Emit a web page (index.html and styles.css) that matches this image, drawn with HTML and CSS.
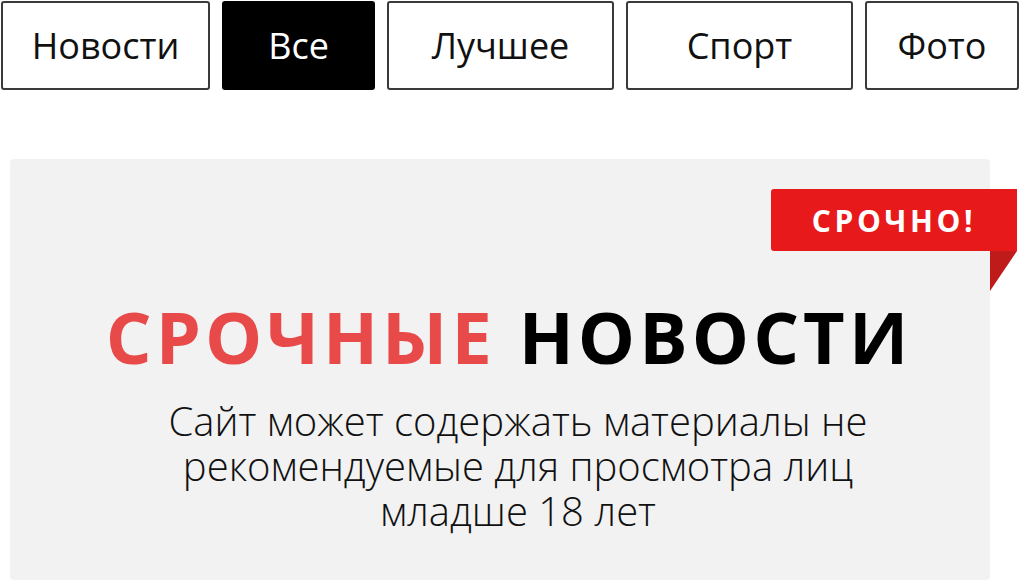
FILE: index.html
```html
<!DOCTYPE html>
<html lang="ru">
<head>
<meta charset="utf-8">
<title>Срочные новости</title>
<link rel="stylesheet" href="styles.css">
</head>
<body>
<nav class="tabs">
  <a class="tab tab-news" href="#">Новости</a>
  <a class="tab tab-all is-active" href="#">Все</a>
  <a class="tab tab-best" href="#">Лучшее</a>
  <a class="tab tab-sport" href="#">Спорт</a>
  <a class="tab tab-photo" href="#">Фото</a>
</nav>
<section class="card">
  <div class="ribbon">СРОЧНО!</div>
  <div class="ribbon-fold"></div>
  <h1 class="headline"><span class="accent">СРОЧНЫЕ</span> НОВОСТИ</h1>
  <p class="desc">Сайт может содержать материалы не рекомендуемые для просмотра лиц младше 18 лет</p>
</section>
</body>
</html>
```
FILE: styles.css
```css
html, body {
  margin: 0;
  padding: 0;
  background: #ffffff;
  font-family: "Open Sans", "Noto Sans", sans-serif;
  color: #111111;
}
.tabs {
  display: flex;
  gap: 12px;
  padding: 1px 0 0 1px;
}
.tab {
  box-sizing: border-box;
  height: 89px;
  display: flex;
  align-items: center;
  justify-content: center;
  border: 2px solid #3a3a3a;
  border-radius: 3px;
  font-size: 36px;
  font-weight: 400;
  color: #111111;
  text-decoration: none;
}
.tab-news { width: 209px; }
.tab-all { width: 153px; }
.tab-best { width: 227px; }
.tab-sport { width: 227px; }
.tab-photo { width: 154px; }
.tab.is-active {
  background: #000000;
  border-color: #000000;
  color: #ffffff;
}
.card {
  position: relative;
  box-sizing: border-box;
  width: 980px;
  height: 421px;
  margin: 69px 0 0 10px;
  padding-top: 141px;
  background: #f2f2f2;
  border-radius: 4px;
}
.ribbon {
  position: absolute;
  top: 30px;
  left: 761px;
  width: 246px;
  height: 62px;
  display: flex;
  align-items: center;
  justify-content: center;
  background: #e8191a;
  border-radius: 3px 0 0 3px;
  color: #ffffff;
  font-weight: 700;
  font-size: 30px;
  letter-spacing: 3.6px;
}
.ribbon-fold {
  position: absolute;
  top: 92px;
  left: 980px;
  width: 0;
  height: 0;
  border-top: 40px solid #c01b1b;
  border-right: 27px solid transparent;
}
.headline {
  margin: 0;
  padding-left: 18px;
  text-align: center;
  font-size: 72px;
  line-height: 72px;
  font-weight: 700;
  letter-spacing: 4.1px;
  color: #000000;
}
.accent {
  color: #e84a4a;
}
.desc {
  width: 740px;
  margin: 26px 0 0 138px;
  text-align: center;
  font-size: 40px;
  line-height: 45px;
  font-weight: 300;
  color: #111111;
}
```
